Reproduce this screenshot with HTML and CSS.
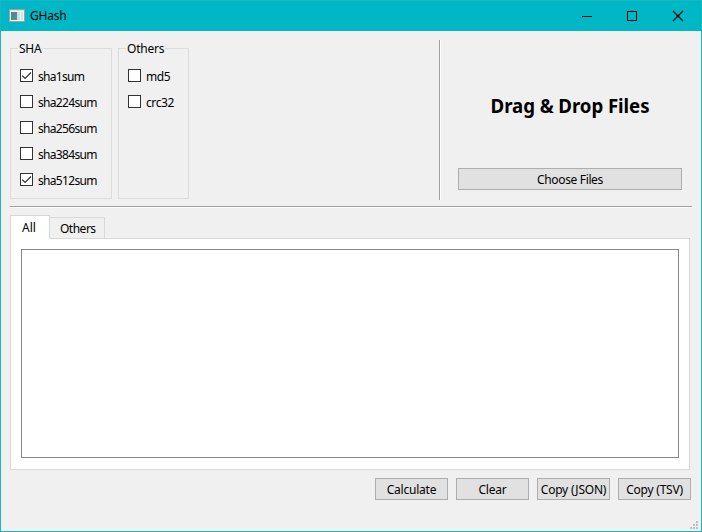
FILE: index.html
```
<!DOCTYPE html>
<html lang="en">
<head>
<meta charset="utf-8">
<title>GHash</title>
<link rel="stylesheet" href="styles.css">
</head>
<body>
<div class="window">
  <header class="titlebar">
    <svg class="app-icon" width="16" height="14" viewBox="0 0 16 14" shape-rendering="crispEdges">
      <defs><linearGradient id="screen" x1="0" y1="0" x2="1" y2="1"><stop offset="0" stop-color="#4d7cb0"/><stop offset="1" stop-color="#4fa06a"/></linearGradient></defs>
      <path fill="#a3a09c" d="M0 0h16v13H0z"/>
      <path fill="#f4f4f4" d="M1 1h14v11H1z"/>
      <path fill="#d9dddd" d="M1 1h14v1H1z"/>
      <path fill="url(#screen)" d="M2 3h6v8H2z"/>
      <path fill="#cfe0e4" d="M8 3h3v8H8zM12 3h2v8h-2z"/>
    </svg>
    <h1 class="title">GHash</h1>
    <div class="controls">
      <svg width="10" height="10" viewBox="0 0 10 10" shape-rendering="crispEdges"><path d="M0 5.5h10" stroke="#000"/></svg>
      <svg width="10" height="10" viewBox="0 0 10 10" shape-rendering="crispEdges"><path d="M.5.5h9v9h-9z" fill="none" stroke="#000"/></svg>
      <svg width="10" height="10" viewBox="0 0 10 10"><path d="M0 0l10 10M10 0L0 10" stroke="#000" stroke-width="1.1"/></svg>
    </div>
  </header>
  <section class="top">
    <fieldset class="group sha">
      <legend>SHA</legend>
      <label class="check"><i><svg width="11" height="11" viewBox="0 0 11 11"><path d="M1.3 5.6L4.1 8.4L10 2.5" fill="none" stroke="#333" stroke-width="1.2"/></svg></i><span>sha1sum</span></label>
      <label class="check"><i></i><span>sha224sum</span></label>
      <label class="check"><i></i><span>sha256sum</span></label>
      <label class="check"><i></i><span>sha384sum</span></label>
      <label class="check"><i><svg width="11" height="11" viewBox="0 0 11 11"><path d="M1.3 5.6L4.1 8.4L10 2.5" fill="none" stroke="#333" stroke-width="1.2"/></svg></i><span>sha512sum</span></label>
    </fieldset>
    <fieldset class="group others">
      <legend>Others</legend>
      <label class="check"><i></i><span>md5</span></label>
      <label class="check"><i></i><span>crc32</span></label>
    </fieldset>
    <div class="drop">
      <h2>Drag &amp; Drop Files</h2>
      <button class="choose">Choose Files</button>
    </div>
  </section>
  <div class="rule"></div>
  <nav class="tabs"><div class="tab active">All</div><div class="tab">Others</div></nav>
  <main class="pane"><div class="output"></div></main>
  <footer class="actions">
    <button>Calculate</button>
    <button>Clear</button>
    <button>Copy (JSON)</button>
    <button>Copy (TSV)</button>
  </footer>
  <svg class="grip" width="8" height="8" viewBox="0 0 8 8" shape-rendering="crispEdges"><path fill="#bfbfbf" d="M6 0h2v2H6zM3 3h2v2H3zM6 3h2v2H6zM0 6h2v2H0zM3 6h2v2H3zM6 6h2v2H6z"/></svg>
</div>
</body>
</html>
```
FILE: styles.css
```
* { box-sizing: border-box; }
body {
  margin: 0;
  font: 12px/16px "Noto Sans", sans-serif;
  letter-spacing: -0.22px;
  color: #000;
}
.window {
  position: relative;
  display: flex;
  flex-direction: column;
  width: 702px;
  height: 532px;
  background: #f0f0f0;
  border: 1px solid #18b5c3;
}
.titlebar {
  display: flex;
  align-items: center;
  height: 30px;
  padding: 0 18px 0 8px;
  background: #00b7c6;
}
.title {
  margin: 0 0 0 5px;
  font-size: 12px;
  font-weight: 400;
}
.controls {
  display: flex;
  gap: 35px;
  margin-left: auto;
}
.controls svg { display: block; overflow: visible; }
.controls svg:nth-child(3) { margin-left: 1px; }
.top {
  display: flex;
  height: 169px;
  padding: 9px 9px 0;
}
.group {
  height: 159px;
  min-width: 0;
  margin: 0;
  padding: 13px 0 0 9px;
  border: 1px solid #dcdcdc;
}
.group legend {
  height: 16px;
  margin-left: -2px;
  padding: 1px 1px 0;
}
.sha { width: 102px; margin-right: 6px; }
.others { width: 71px; }
.check {
  display: flex;
  align-items: flex-start;
  height: 16px;
  margin-bottom: 10px;
}
.check i {
  width: 13px;
  height: 13px;
  margin-right: 5px;
  background: #fff;
  border: 1px solid #333;
}
.check i svg { display: block; }
.check span { letter-spacing: -0.4px; }
.sha .check span { letter-spacing: -0.68px; }
.drop {
  display: flex;
  flex-direction: column;
  align-items: center;
  width: 253px;
  height: 160px;
  margin-left: auto;
  padding: 53px 10px 0 18px;
  border-left: 1px solid #a0a0a0;
  box-shadow: inset 1px 0 #fff;
}
.drop h2 {
  margin: 0;
  font-size: 18.67px;
  line-height: 26px;
  letter-spacing: -0.07px;
  white-space: nowrap;
}
button {
  width: 73px;
  height: 22px;
  padding: 1px 0 0;
  font: inherit;
  letter-spacing: inherit;
  color: #000;
  white-space: nowrap;
  background: #e1e1e1;
  border: 1px solid #adadad;
  border-radius: 0;
}
.drop .choose { width: 224px; margin-top: 49px; letter-spacing: -0.35px; }
.rule {
  height: 2px;
  margin: 6px 9px 0;
  border-top: 1px solid #a0a0a0;
  border-bottom: 1px solid #fff;
}
.tabs {
  position: relative;
  display: flex;
  align-items: flex-end;
  height: 24px;
  margin: 7px 0 -1px 9px;
}
.tab {
  width: 55px;
  height: 22px;
  padding: 3px 0 0 10px;
  letter-spacing: -0.5px;
  border: 1px solid #d9d9d9;
  border-left: 0;
}
.tab.active {
  width: 40px;
  height: 24px;
  padding: 4px 0 0 11px;
  letter-spacing: 0;
  background: #fff;
  border-left: 1px solid #d9d9d9;
  border-bottom: 0;
}
.pane {
  width: 680px;
  height: 232px;
  margin-left: 9px;
  padding: 10px;
  background: #fff;
  border: 1px solid #d9d9d9;
}
.output {
  height: 209px;
  background: #fff;
  border: 1px solid #828790;
}
.actions {
  display: flex;
  justify-content: flex-end;
  gap: 8px;
  margin: 8px 10px 0 0;
}
.grip { position: absolute; right: 3px; bottom: 2px; }
```
